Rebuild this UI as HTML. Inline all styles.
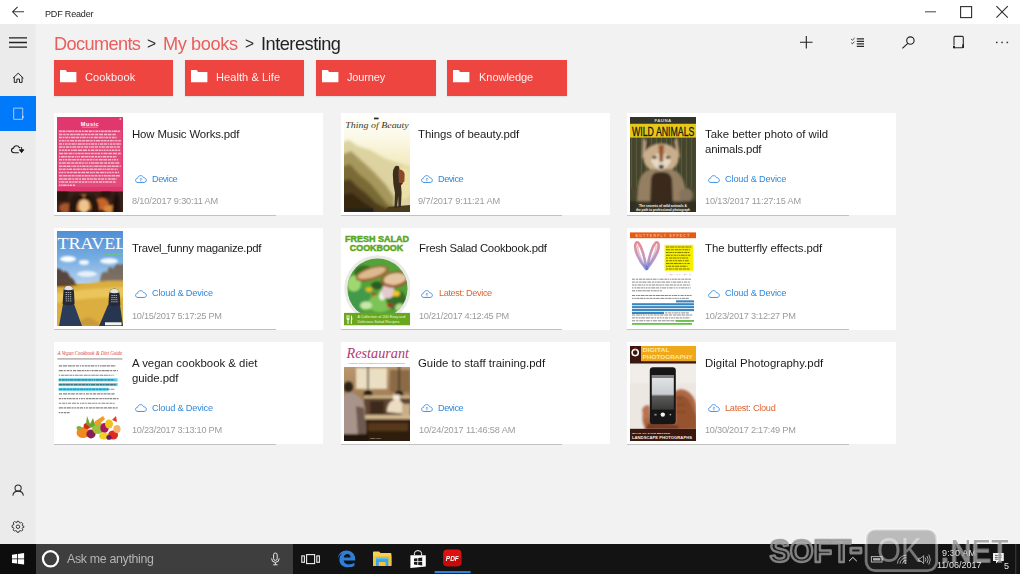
<!DOCTYPE html>
<html><head><meta charset="utf-8"><title>PDF Reader</title>
<style>
*{box-sizing:border-box;margin:0;padding:0}
html,body{width:1020px;height:574px;overflow:hidden;background:#f2f2f2;font-family:"Liberation Sans",sans-serif;}
#app{position:relative;width:1020px;height:574px;overflow:hidden;background:#f2f2f2}
.abs{position:absolute}
#titlebar{left:0;top:0;width:1020px;height:24px;background:#fff}
#sidebar{left:0;top:24px;width:37px;height:520px;background:linear-gradient(90deg,#ebebeb 0,#ebebeb 34.5px,#f2f2f2 36.5px)}
#sel{left:0;top:96px;width:36px;height:35px;background:#0079fb}
#taskbar{left:0;top:544px;width:1020px;height:30px;background:#131313}
#startbtn{left:0;top:544px;width:36px;height:30px;background:#0d0d0d}
#search{left:36px;top:544px;width:257px;height:30px;background:#3e3e3e}
span.f{position:absolute;white-space:nowrap;line-height:1;display:block;will-change:transform}
.bc{top:34.5px;font-size:18.2px}
.bc.red{color:#ea5e5b}
.bc.sep{color:#2c2c2c;font-size:15.6px;top:36.4px}
.bc.blk{color:#222}
.apptitle{top:9.5px;font-size:9px;color:#1e1e1e}
.folder{position:absolute;top:60.3px;width:119.6px;height:35.6px;background:#ef4541;box-shadow:0 1px 1.5px rgba(0,0,0,.10)}
.folder svg{position:absolute;left:6px;top:9.8px}
.fol{top:71.7px;font-size:11px;color:#fdf3f2}
.card{position:absolute;width:269px;height:102px;background:#fff}
.card .ul{position:absolute;left:0;bottom:-.5px;width:221.5px;height:1px;background:#c2c2c2}
.card .th{position:absolute;left:3px;top:3.5px;width:66px;height:95px;overflow:hidden}
.card .th svg{display:block}
.ti{font-size:11.4px;color:#1c1c1c}
.lo{font-size:9.2px;color:#3088da}
.lo.or{color:#dc642f}
.cl{position:absolute;width:12px;height:8.3px}
.cl svg{display:block}
.dt{font-size:9.2px;color:#9b9b9b}
.ask{top:552.6px;font-size:12.4px;color:#b4b4b4}
.clk{font-size:9px;color:#e4e4e4}
svg{overflow:visible}
</style></head><body>
<div id="app">
<div class="abs" id="titlebar"></div>
<div class="abs" id="sidebar"></div>
<div class="abs" id="sel"></div>
<!-- chrome icons -->
<svg class="abs" style="left:0;top:0" width="1020" height="160" viewBox="0 0 1020 160" fill="none" stroke="#333" stroke-width="1.1" stroke-linecap="butt">
  <!-- back arrow -->
  <path d="M12.6 11.8H24M17.6 6.8L12.6 11.8L17.6 16.8" stroke="#3a3a3a" stroke-width="1.1"/>
  <!-- window controls -->
  <path d="M925 11.8H936" stroke="#555"/>
  <rect x="960.6" y="6.6" width="11" height="11" stroke="#2e2e2e"/>
  <path d="M996.4 6.2L1007.8 17.6M1007.8 6.2L996.4 17.6" stroke="#2e2e2e"/>
  <!-- hamburger -->
  <path d="M9 37.8H27M9 42.5H27M9 47.2H27" stroke="#222" stroke-width="1.3"/>
  <!-- home -->
  <path d="M13 78.2L18.2 73.2L23.4 78.2M14.3 77.2V82.4H16.9V79.1H19.5V82.4H22.1V77.2" stroke="#222" stroke-width="1"/>
  <!-- device (selected) -->
  <path d="M13.7 108.1H22.7V115.8M22.7 118V119.3H13.7V108.1" stroke="#a6cbfb" stroke-width="1"/>
  <rect x="22" y="115.8" width="1.6" height="2.2" fill="#c4dcfc" stroke="none"/>
  <!-- cloud download -->
  <path d="M18.8 152.7H14.3C12.6 152.7 11.5 151.7 11.5 150.3C11.5 149.1 12.4 148.2 13.6 148.1C13.9 146.7 15.1 145.8 16.5 145.8C17.7 145.8 18.7 146.4 19.2 147.4C19.6 147.4 20 147.5 20.3 147.7" stroke="#1a1a1a" stroke-width="1.1"/>
  <path d="M21.6 147V150M19.4 149.7H23.8L21.6 152.7Z" fill="#1a1a1a" stroke="#1a1a1a" stroke-width=".9"/>
  <!-- toolbar: plus -->
  <path d="M800 42.3H812.6M806.3 36V48.6" stroke="#222" stroke-width="1.1"/>
  <!-- list -->
  <path d="M856.8 38.9H864M856.8 41.4H864M856.8 43.9H864M856.8 46.4H864" stroke="#2a2a2a" stroke-width="1.1"/>
  <path d="M851.2 39.2L852.4 40.2L854.6 38M851.2 42.8L852.4 43.8L854.6 41.6" stroke="#2a2a2a" stroke-width=".9"/>
  <!-- search -->
  <circle cx="910.4" cy="40.6" r="3.7" stroke="#222" stroke-width="1.1"/>
  <path d="M907.8 43.4L902.4 48.4" stroke="#222" stroke-width="1.2"/>
  <!-- device icon -->
  <path d="M955 36.4H962.3Q963.3 36.4 963.3 37.4V46.8Q963.3 47.8 962.3 47.8H953.8M954 45.6V37.4Q954 36.4 955 36.4" stroke="#2a2a2a" stroke-width="1.1"/>
  <rect x="962.2" y="44.4" width="1.8" height="3.6" fill="#222" stroke="none"/>
  <rect x="953" y="46" width="2" height="2.2" fill="#222" stroke="none"/>
  <!-- dots -->
  <g fill="#333" stroke="none"><rect x="996" y="41.7" width="1.5" height="1.5"/><rect x="1001.3" y="41.7" width="1.5" height="1.5"/><rect x="1006.6" y="41.7" width="1.5" height="1.5"/></g>
</svg>
<!-- person + gear -->
<svg class="abs" style="left:0;top:480px" width="36" height="60" viewBox="0 480 36 60" fill="none" stroke="#2a2a2a" stroke-width="1.05">
  <circle cx="18.1" cy="488" r="3.1"/>
  <path d="M12.8 495.6C13.2 492.6 15.4 491.1 18.1 491.1C20.8 491.1 23 492.6 23.4 495.6"/>
  <g transform="translate(18 526.7) scale(.88) translate(-18 -526.7)"><circle cx="18" cy="526.7" r="2"/>
  <path d="M16.9 520.6H19.1L19.5 522.1L20.6 522.6L22 521.8L23.5 523.3L22.7 524.7L23.2 525.8L24.7 526.2V527.4L23.2 527.8L22.7 528.9L23.5 530.3L22 531.8L20.6 531L19.5 531.5L19.1 533H16.9L16.5 531.5L15.4 531L14 531.8L12.5 530.3L13.3 528.9L12.8 527.8L11.3 527.4V525.2L12.8 524.8L13.3 523.7L12.5 522.3L14 520.8L15.4 521.6L16.5 522.1Z" stroke-width="1.05"/></g>
</svg>
<div class="abs" id="taskbar"></div>
<div class="abs" id="startbtn"></div>
<div class="abs" id="search"></div>

<div id="bc">
<span id="bc1" class="f bc red" style="left:54.10px;letter-spacing:-0.637px;">Documents</span>
<span id="bc2" class="f bc sep" style="left:147.30px;letter-spacing:0.000px;">&gt;</span>
<span id="bc3" class="f bc red" style="left:163.30px;letter-spacing:-0.406px;">My books</span>
<span id="bc4" class="f bc sep" style="left:244.50px;letter-spacing:0.000px;">&gt;</span>
<span id="bc5" class="f bc blk" style="left:260.50px;letter-spacing:-0.494px;">Interesting</span>
</div>
<span id="apptitle" class="f apptitle" style="left:45.30px;letter-spacing:-0.170px;">PDF Reader</span>
<div class="folder" style="left:53.5px"><svg width="17" height="13" viewBox="0 0 17 13"><path d="M0 .4Q0 0 .4 0H5.4Q5.9 0 6.2.5L6.9 1.9H15.9Q16.4 1.9 16.4 2.4V11.8Q16.4 12.3 15.9 12.3H.5Q0 12.3 0 11.8Z" fill="#fff"/></svg>
</div>
<span id="fo0" class="f fol" style="left:84.50px;letter-spacing:0.093px;">Cookbook</span>
<div class="folder" style="left:184.75px"><svg width="17" height="13" viewBox="0 0 17 13"><path d="M0 .4Q0 0 .4 0H5.4Q5.9 0 6.2.5L6.9 1.9H15.9Q16.4 1.9 16.4 2.4V11.8Q16.4 12.3 15.9 12.3H.5Q0 12.3 0 11.8Z" fill="#fff"/></svg>
</div>
<span id="fo1" class="f fol" style="left:216.00px;letter-spacing:0.085px;">Health &amp; Life</span>
<div class="folder" style="left:316.0px"><svg width="17" height="13" viewBox="0 0 17 13"><path d="M0 .4Q0 0 .4 0H5.4Q5.9 0 6.2.5L6.9 1.9H15.9Q16.4 1.9 16.4 2.4V11.8Q16.4 12.3 15.9 12.3H.5Q0 12.3 0 11.8Z" fill="#fff"/></svg>
</div>
<span id="fo2" class="f fol" style="left:346.70px;letter-spacing:-0.140px;">Journey</span>
<div class="folder" style="left:447.25px"><svg width="17" height="13" viewBox="0 0 17 13"><path d="M0 .4Q0 0 .4 0H5.4Q5.9 0 6.2.5L6.9 1.9H15.9Q16.4 1.9 16.4 2.4V11.8Q16.4 12.3 15.9 12.3H.5Q0 12.3 0 11.8Z" fill="#fff"/></svg>
</div>
<span id="fo3" class="f fol" style="left:478.80px;letter-spacing:-0.030px;">Knowledge</span>
<div class="card" style="left:54px;top:113px"><div class="th"><svg width="66" height="95" viewBox="0 0 66 95"><defs><filter id="b1" x="-20%" y="-20%" width="140%" height="140%"><feGaussianBlur stdDeviation="1.3"/></filter><clipPath id="c1"><rect x="0" y="74.5" width="66" height="20.5"/></clipPath></defs>
<rect width="66" height="95" fill="#e0376f"/>
<rect x="1" y="13" width="64" height="57" fill="#fff" opacity=".10"/>
<path d="M2 14.20H62.8" stroke="#fff" stroke-width="1.5" stroke-dasharray="2.8 0.6 3.0 0.8 1.4 0.5 3.7 0.6 1.9 0.9 2.6 0.8 2.6 0.8 1.7 0.8 3.8 0.7 3.4 0.8 1.4 0.8 3.0 0.6 1.3 0.8 2.6 0.8" opacity="0.62" fill="none"/>
<path d="M2 17.38H59.6" stroke="#fff" stroke-width="1.5" stroke-dasharray="3.3 0.9 2.4 0.8 2.5 0.9 3.8 0.5 1.6 0.6 4.1 0.7 3.1 0.6 2.7 0.7 2.3 0.7 3.0 0.9 3.2 0.9 3.8 0.9 3.2 0.6 3.8 0.9" opacity="0.62" fill="none"/>
<path d="M2 20.56H59.5" stroke="#fff" stroke-width="1.5" stroke-dasharray="2.9 0.8 1.8 0.8 2.9 0.6 1.4 0.8 4.2 0.5 3.6 0.7 1.7 0.6 3.5 0.8 1.3 0.7 1.3 0.8 2.2 0.9 4.1 0.7 4.2 0.6 1.4 0.7" opacity="0.62" fill="none"/>
<path d="M2 23.74H63.8" stroke="#fff" stroke-width="1.5" stroke-dasharray="1.8 0.7 3.0 0.6 1.3 0.8 2.1 0.9 3.9 0.7 2.6 0.7 3.1 0.7 2.9 0.7 4.0 0.7 2.5 0.8 1.9 0.6 4.1 0.7 2.8 0.5 2.4 0.7" opacity="0.62" fill="none"/>
<path d="M2 26.92H63.9" stroke="#fff" stroke-width="1.5" stroke-dasharray="3.0 0.8 1.4 0.8 2.6 0.8 2.3 0.8 3.4 0.5 1.4 0.8 4.1 0.6 2.6 0.7 2.2 0.6 2.1 0.6 3.0 0.6 2.3 0.8 1.3 0.7 3.4 0.6" opacity="0.62" fill="none"/>
<path d="M2 30.10H62.9" stroke="#fff" stroke-width="1.5" stroke-dasharray="3.6 0.6 1.8 0.7 3.3 0.5 2.2 0.6 3.7 0.7 3.8 0.6 2.2 0.8 3.9 0.7 1.9 0.5 2.8 0.6 3.6 0.8 1.8 0.6 3.6 0.8 3.6 0.6" opacity="0.62" fill="none"/>
<path d="M2 33.28H63.4" stroke="#fff" stroke-width="1.5" stroke-dasharray="2.1 0.8 2.0 0.6 2.5 0.7 2.4 0.9 1.7 0.5 4.0 0.9 4.2 0.7 4.1 0.9 1.9 0.8 3.7 0.8 2.8 0.6 2.2 0.6 1.4 0.7 2.1 0.8" opacity="0.62" fill="none"/>
<path d="M2 36.46H63.8" stroke="#fff" stroke-width="1.5" stroke-dasharray="3.9 0.8 4.0 0.9 3.9 0.7 1.2 0.8 1.7 0.6 3.2 0.7 2.4 0.9 3.0 0.6 2.0 0.8 2.6 0.8 2.3 0.6 2.8 0.8 1.7 0.8 4.0 0.8" opacity="0.62" fill="none"/>
<path d="M2 39.64H59.9" stroke="#fff" stroke-width="1.5" stroke-dasharray="1.2 0.8 3.8 0.5 2.0 0.6 2.8 0.7 2.6 0.8 1.2 0.5 1.6 0.5 1.4 0.9 3.8 0.5 2.7 0.6 2.1 0.6 3.1 0.7 2.3 0.6 2.2 0.5" opacity="0.62" fill="none"/>
<path d="M2 42.82H61.2" stroke="#fff" stroke-width="1.5" stroke-dasharray="3.3 0.7 1.4 0.6 2.3 0.7 3.5 0.7 3.6 0.7 2.5 0.6 2.7 0.8 2.5 0.8 2.6 0.6 2.8 0.8 1.4 0.7 2.5 0.9 4.0 0.6 3.9 0.8" opacity="0.62" fill="none"/>
<path d="M2 46.00H62.7" stroke="#fff" stroke-width="1.5" stroke-dasharray="2.6 0.5 3.6 0.8 3.9 0.8 3.2 0.8 2.9 0.5 3.0 0.5 1.6 0.8 1.3 0.5 1.5 0.9 1.7 0.5 3.7 0.5 3.7 0.8 3.7 0.9 2.9 0.8" opacity="0.62" fill="none"/>
<path d="M2 49.18H63.8" stroke="#fff" stroke-width="1.5" stroke-dasharray="3.5 0.7 3.3 0.5 3.4 0.9 1.4 0.6 2.9 0.8 1.9 0.6 1.9 0.7 3.5 0.7 2.3 0.7 2.3 0.7 1.4 0.7 4.1 0.7 3.4 0.6 3.3 0.8" opacity="0.62" fill="none"/>
<path d="M2 52.36H60.6" stroke="#fff" stroke-width="1.5" stroke-dasharray="2.8 0.7 3.1 0.9 1.6 0.5 3.4 0.9 2.8 0.7 3.4 0.6 2.0 0.6 3.0 0.6 1.9 0.8 4.1 0.6 3.3 0.7 3.8 0.7 2.0 0.6 1.3 0.7" opacity="0.62" fill="none"/>
<path d="M2 55.54H62.1" stroke="#fff" stroke-width="1.5" stroke-dasharray="1.7 0.6 2.2 0.8 1.6 0.9 2.6 0.7 2.6 0.8 3.7 0.7 2.6 0.8 3.8 0.7 3.4 0.9 2.6 0.6 1.9 0.8 3.2 0.9 3.8 0.6 1.8 0.6" opacity="0.62" fill="none"/>
<path d="M2 58.72H63.1" stroke="#fff" stroke-width="1.5" stroke-dasharray="3.3 0.8 3.9 0.6 3.8 0.6 2.5 0.8 1.5 0.5 3.7 0.6 2.3 0.7 3.2 0.5 2.2 0.7 2.7 0.6 3.0 0.9 2.4 0.7 1.6 0.6 3.2 0.5" opacity="0.62" fill="none"/>
<path d="M2 61.90H59.6" stroke="#fff" stroke-width="1.5" stroke-dasharray="3.9 0.5 4.0 0.6 3.5 0.8 2.1 0.8 3.2 0.8 2.0 0.8 4.1 0.8 2.8 0.5 2.7 0.6 3.4 0.8 2.9 0.6 3.1 0.8 1.7 0.9 3.2 0.5" opacity="0.62" fill="none"/>
<path d="M2 65.08H59.3" stroke="#fff" stroke-width="1.5" stroke-dasharray="1.6 0.6 3.4 0.7 2.9 0.8 2.6 0.6 1.7 0.5 3.3 0.8 2.8 0.8 2.3 0.6 2.4 0.8 1.3 0.7 1.9 0.8 2.3 0.6 2.4 0.7 3.5 0.6" opacity="0.62" fill="none"/>
<path d="M2 68.26H18.0" stroke="#fff" stroke-width="1.5" stroke-dasharray="1.5 0.6 1.5 0.5 3.5 0.8 1.8 0.6 2.4 0.8 3.6 0.8 3.0 0.6 2.4 0.6 2.8 0.7 1.8 0.6 3.5 0.5 3.6 0.9 4.0 0.7 2.9 0.7" opacity="0.62" fill="none"/>
<text x="33" y="8.6" font-family="Liberation Sans,sans-serif" font-weight="700" font-size="5.6" letter-spacing=".5" fill="#fff" text-anchor="middle">Music</text>
<rect x="25" y="9.8" width="16" height=".6" fill="#f6b6cc"/><rect x="62.6" y="1.2" width="1.6" height="1.6" fill="#f3c3d4"/>
<rect y="74.5" width="66" height="20.5" fill="#3a2118"/>
<g clip-path="url(#c1)"><g filter="url(#b1)">
<ellipse cx="26" cy="86" rx="11" ry="9" fill="#c9783a"/>
<ellipse cx="27" cy="89" rx="5" ry="7" fill="#ecc68c"/>
<ellipse cx="44" cy="87" rx="8" ry="6" fill="#c8642a"/>
<ellipse cx="9" cy="91" rx="7" ry="5" fill="#a9542a"/>
<ellipse cx="53" cy="92" rx="7" ry="4" fill="#d98a3c"/>
<path d="M12 96C11 84 16 76.5 24 77.5C27 78 27 81 26 83C22 82 19 86 20 96ZM42 96C43 84 38 76.5 30 77.5C27 78 27 81 28 83C32 82 35 86 34 96Z" fill="#23120c"/>
<path d="M55 96L56.5 81L59.5 75L62 81L62.5 96Z" fill="#1c0e0a"/>
<rect x="-2" y="73" width="13" height="11" fill="#2a1711"/><rect x="44" y="73" width="10" height="8" fill="#2a1711"/>
</g></g>
</svg></div><div class="ul"></div></div>
<span id="ti0_0" class="f ti" style="left:131.90px;letter-spacing:-0.141px;top:128.8px;">How Music Works.pdf</span>
<div class="cl" style="left:134.9px;top:175.4px"><svg width="12" height="8.3" viewBox="0 0 13 9"><path d="M3.2 8.1C1.7 8.1.6 7.1.6 5.8C.6 4.6 1.5 3.7 2.7 3.6C3 1.9 4.4.7 6.1.7C7.6.7 8.8 1.6 9.3 2.9C10.9 3 12.3 4.2 12.3 5.7C12.3 7.1 11.2 8.1 9.8 8.1Z" fill="none" stroke="#3f90e0" stroke-width="1.05"/><path d="M6.4 7V3.6M5.2 4.7L6.4 3.5L7.6 4.7" fill="none" stroke="#5a8fd0" stroke-width=".8"/></svg>
</div>
<span id="lo0" class="f lo" style="left:151.90px;letter-spacing:-0.499px;top:174.8px;">Device</span>
<span id="dt0" class="f dt" style="left:131.90px;letter-spacing:-0.160px;top:197.0px;">8/10/2017 9:30:11 AM</span>
<div class="card" style="left:340.5px;top:113px"><div class="th"><svg width="66" height="95" viewBox="0 0 66 95"><defs><filter id="b2" x="-20%" y="-20%" width="140%" height="140%"><feGaussianBlur stdDeviation="1.8"/></filter><filter id="bh2" x="-20%" y="-20%" width="140%" height="140%"><feGaussianBlur stdDeviation=".45"/></filter><linearGradient id="g2" x1="0" y1="0" x2="0" y2="1"><stop offset="0" stop-color="#fffefa"/><stop offset=".22" stop-color="#fbf8e6"/><stop offset=".55" stop-color="#f1e8b8"/><stop offset="1" stop-color="#d4c684"/></linearGradient><clipPath id="c2"><rect width="66" height="95"/></clipPath></defs>
<rect width="66" height="95" fill="url(#g2)"/>
<g clip-path="url(#c2)"><g filter="url(#b2)">
<path d="M-3 26L5 23L13 29L26 33L42 42L66 50V95H-3Z" fill="#ddd3a0"/>
<path d="M-3 38L7 34L18 44L30 55L42 68L50 80V95H-3Z" fill="#a6985c"/>
<path d="M-3 50L6 47L15 57L26 66L36 78L44 88L66 92V97H-3Z" fill="#7a6a36"/>
<path d="M-3 64L6 62L14 70L22 76L32 86L44 92L66 94V98H-3Z" fill="#4e3e1c"/>
<path d="M-3 78L8 76L18 84L30 92V98H-3Z" fill="#35280f"/>
<ellipse cx="60" cy="66" rx="9" ry="16" fill="#ece2a8"/>
</g>
<g filter="url(#bh2)">
<path d="M40 95L44 90L66 88V95Z" fill="#4a3a1e"/>
<path d="M50.8 49.8Q53 47.6 55 49.6L55.6 53L58.5 54.5Q60.5 56 60 62L58.5 67L57 68L57.6 76L56.8 90.5H54.4L54.2 79L53 91H50.4L51 76L49.4 67L48.8 57Q49 52 50.8 49.8Z" fill="#3b2e1c"/>
<path d="M54.5 52.5Q59.4 52 60.6 57L60.4 64.5Q57.5 67.4 54.8 65.5Z" fill="#8c4a2c"/>
</g>
<rect x="1" y="91.4" width="28" height="3" fill="#26241a"/>
</g>
<rect x="30" y=".6" width="4.6" height="1.7" fill="#2a2a1c"/>
<text x="1.2" y="11.4" font-family="Liberation Serif,serif" font-style="italic" font-size="8.4" fill="#3a3a22" textLength="63.6" lengthAdjust="spacingAndGlyphs">Thing of Beauty</text>
</svg>
</div><div class="ul"></div></div>
<span id="ti1_0" class="f ti" style="left:418.20px;letter-spacing:-0.057px;top:128.8px;">Things of beauty.pdf</span>
<div class="cl" style="left:421.4px;top:175.4px"><svg width="12" height="8.3" viewBox="0 0 13 9"><path d="M3.2 8.1C1.7 8.1.6 7.1.6 5.8C.6 4.6 1.5 3.7 2.7 3.6C3 1.9 4.4.7 6.1.7C7.6.7 8.8 1.6 9.3 2.9C10.9 3 12.3 4.2 12.3 5.7C12.3 7.1 11.2 8.1 9.8 8.1Z" fill="none" stroke="#3f90e0" stroke-width="1.05"/><path d="M6.4 7V3.6M5.2 4.7L6.4 3.5L7.6 4.7" fill="none" stroke="#5a8fd0" stroke-width=".8"/></svg>
</div>
<span id="lo1" class="f lo" style="left:438.40px;letter-spacing:-0.499px;top:174.8px;">Device</span>
<span id="dt1" class="f dt" style="left:418.40px;letter-spacing:-0.112px;top:197.0px;">9/7/2017 9:11:21 AM</span>
<div class="card" style="left:627px;top:113px"><div class="th"><svg width="66" height="95" viewBox="0 0 66 95"><defs><filter id="b3" x="-20%" y="-20%" width="140%" height="140%"><feGaussianBlur stdDeviation="1.3"/></filter><clipPath id="c3"><rect y="20.6" width="66" height="74.4"/></clipPath><pattern id="gr3" width="5" height="40" patternUnits="userSpaceOnUse"><rect x="1" width="1" height="40" fill="#6b6d45" opacity=".45"/><rect x="3.4" width=".7" height="40" fill="#2e3020" opacity=".45"/></pattern></defs>
<rect width="66" height="95" fill="#47472f"/>
<rect width="66" height="6.8" fill="#34342a"/>
<text x="33" y="5.2" font-family="Liberation Sans,sans-serif" font-weight="700" font-size="4.4" fill="#d8d8cc" text-anchor="middle" letter-spacing=".4">FAUNA</text>
<g clip-path="url(#c3)">
<rect y="20.6" width="66" height="50" fill="url(#gr3)"/>
<g filter="url(#b3)">
<path d="M13 20L21 32L12 42ZM47 20L40 32L50 41Z" fill="#c4a684"/>
<path d="M16 24L20.5 31L15.5 35ZM45 24L41 31L46 35Z" fill="#3a2e22"/>
<ellipse cx="31" cy="41" rx="17.5" ry="14.5" fill="#c9ae8c"/>
<path d="M8 70Q10 54 22 52H40Q52 54 55 70L58 97H6Z" fill="#957f62"/>
<path d="M21 44Q31 62 41 44Q39 37 31 36Q23 37 21 44Z" fill="#e6dac6"/>
<path d="M28.5 28H34L33 45H29.5Z" fill="#99542c"/>
<path d="M21 62Q22 54 31 55Q40 54 42 62L43 88H20Z" fill="#3a2a1e"/>
<ellipse cx="24.5" cy="40.3" rx="2.5" ry="1.5" fill="#4a2a18"/><ellipse cx="38" cy="40.3" rx="2.5" ry="1.5" fill="#4a2a18"/>
<ellipse cx="31.3" cy="49.8" rx="2.6" ry="2.1" fill="#120e0b"/>
<ellipse cx="56" cy="78" rx="7" ry="7" fill="#85735a"/>
<rect x="-2" y="84" width="70" height="14" fill="#2e2a1e" opacity=".85"/>
</g></g>
<rect y="6.8" width="66" height="13.8" fill="#e6c71c"/>
<text x="2" y="18.6" font-family="Liberation Sans,sans-serif" font-weight="400" font-size="12" fill="#1c1a0c" stroke="#1c1a0c" stroke-width=".3" textLength="62.4" lengthAdjust="spacingAndGlyphs">WILD ANIMALS</text>
<text x="33" y="90" font-family="Liberation Sans,sans-serif" font-weight="700" font-size="3" fill="#f2f2ea" text-anchor="middle" textLength="48" lengthAdjust="spacingAndGlyphs">The secrets of wild animals &amp;</text>
<text x="33" y="93.6" font-family="Liberation Sans,sans-serif" font-weight="700" font-size="3" fill="#f2f2ea" text-anchor="middle" textLength="54" lengthAdjust="spacingAndGlyphs">the path to professional photograph</text>
</svg>
</div><div class="ul"></div></div>
<span id="ti2_0" class="f ti" style="left:705.20px;letter-spacing:-0.016px;top:128.8px;">Take better photo of wild</span>
<span id="ti2_1" class="f ti" style="left:705.20px;letter-spacing:-0.175px;top:143.8px;">animals.pdf</span>
<div class="cl" style="left:707.9px;top:175.4px"><svg width="12" height="8.3" viewBox="0 0 13 9"><path d="M3.2 8.1C1.7 8.1.6 7.1.6 5.8C.6 4.6 1.5 3.7 2.7 3.6C3 1.9 4.4.7 6.1.7C7.6.7 8.8 1.6 9.3 2.9C10.9 3 12.3 4.2 12.3 5.7C12.3 7.1 11.2 8.1 9.8 8.1Z" fill="none" stroke="#3f90e0" stroke-width="1.05"/></svg>
</div>
<span id="lo2" class="f lo" style="left:725.00px;letter-spacing:-0.148px;top:174.8px;">Cloud &amp; Device</span>
<span id="dt2" class="f dt" style="left:705.20px;letter-spacing:-0.160px;top:197.0px;">10/13/2017 11:27:15 AM</span>
<div class="card" style="left:54px;top:227.5px"><div class="th"><svg width="66" height="95" viewBox="0 0 66 95"><defs><filter id="b4" x="-20%" y="-20%" width="140%" height="140%"><feGaussianBlur stdDeviation="1.1"/></filter><linearGradient id="s4" x1="0" y1="0" x2="0" y2="1"><stop offset="0" stop-color="#4f8fd6"/><stop offset=".3" stop-color="#78aee2"/><stop offset=".55" stop-color="#b4d0ec"/><stop offset=".56" stop-color="#d9aa3c"/><stop offset="1" stop-color="#e0b548"/></linearGradient><clipPath id="c4"><rect width="66" height="95"/></clipPath></defs>
<rect width="66" height="95" fill="url(#s4)"/>
<g clip-path="url(#c4)"><g filter="url(#b4)">
<ellipse cx="11" cy="28" rx="8" ry="3" fill="#fff"/><ellipse cx="27" cy="31.5" rx="5" ry="2.4" fill="#f4f8fd"/><ellipse cx="52" cy="30" rx="9" ry="3" fill="#f4f8fd"/><ellipse cx="30" cy="43" rx="10" ry="3" fill="#e8f0fa"/>
<path d="M-2 56L-2 38Q3 36 6 41Q10 38 13 46Q17 47 19 54L30 56Z" fill="#4b301f" opacity=".85"/>
<path d="M42 54L44 44Q47 38 50 42Q52 32 56 38Q60 30 63 34L68 32V54Z" fill="#6b4a2a" opacity=".7"/>
<path d="M-2 56Q20 56 40 51Q55 49 68 50V97H-2Z" fill="#dcae40"/>
<path d="M-2 62Q25 58 68 56V66Q30 66 -2 72Z" fill="#e9c55c"/>
<path d="M20 95Q30 78 44 95Z" fill="#c79a3a"/>
</g>
<path d="M2 95L6 73L17 73L25 95Z" fill="#2b3b5a"/><path d="M42 95L51 74L63 74L66 95Z" fill="#27364f"/>
<path d="M6.4 61Q6.2 54.6 11.2 54.4Q16.6 54.4 17 61L17.6 73Q12 75.6 5.6 73Z" fill="#262a36"/>
<path d="M52 64Q52.4 57.6 57.4 57.4Q62.4 57.4 62.8 64L63.4 74Q57 76.6 51.4 74Z" fill="#262a36"/>
<path d="M7 58.4Q7.6 54.8 11.2 54.8Q15.4 54.8 16.2 58.4Q11.6 60 7 58.4Z" fill="#e4e4de"/>
<path d="M52.8 61.4Q53.4 57.8 57.4 57.8Q61.4 57.8 62 61.4Q57.4 63 52.8 61.4Z" fill="#e4e4de"/>
<path d="M8.6 61.5H14.6M8.6 63.6H14.8M8.6 65.7H15M8.6 67.8H15.2M8.8 69.9H15.2" stroke="#d4d6da" stroke-width=".9" stroke-dasharray="1.4 .7" opacity=".85"/>
<path d="M54.4 64.5H60.6M54.4 66.6H60.8M54.2 68.7H61M54.2 70.8H61.2" stroke="#d4d6da" stroke-width=".9" stroke-dasharray="1.4 .7" opacity=".85"/>
<rect x="48" y="91.3" width="16.5" height="3" fill="#f4f4f0"/>
</g>
<text x=".4" y="18.4" font-family="Liberation Serif,serif" font-size="15.8" fill="#fff" textLength="69" lengthAdjust="spacingAndGlyphs">TRAVEL</text>
<text x="48" y="24.4" font-family="Liberation Sans,sans-serif" font-size="2.6" font-weight="700" fill="#5fd23c" textLength="17.5" lengthAdjust="spacingAndGlyphs">funny magazine</text>
</svg>
</div><div class="ul"></div></div>
<span id="ti3_0" class="f ti" style="left:132.30px;letter-spacing:-0.316px;top:243.3px;">Travel_funny maganize.pdf</span>
<div class="cl" style="left:134.9px;top:289.9px"><svg width="12" height="8.3" viewBox="0 0 13 9"><path d="M3.2 8.1C1.7 8.1.6 7.1.6 5.8C.6 4.6 1.5 3.7 2.7 3.6C3 1.9 4.4.7 6.1.7C7.6.7 8.8 1.6 9.3 2.9C10.9 3 12.3 4.2 12.3 5.7C12.3 7.1 11.2 8.1 9.8 8.1Z" fill="none" stroke="#3f90e0" stroke-width="1.05"/></svg>
</div>
<span id="lo3" class="f lo" style="left:151.90px;letter-spacing:-0.171px;top:289.3px;">Cloud &amp; Device</span>
<span id="dt3" class="f dt" style="left:132.00px;letter-spacing:-0.277px;top:311.5px;">10/15/2017 5:17:25 PM</span>
<div class="card" style="left:340.5px;top:227.5px"><div class="th"><svg width="66" height="95" viewBox="0 0 66 95"><defs><filter id="b5" x="-20%" y="-20%" width="140%" height="140%"><feGaussianBlur stdDeviation="1.2"/></filter><clipPath id="c5"><circle cx="33.5" cy="57.5" r="30"/></clipPath><clipPath id="k5"><rect width="66" height="95"/></clipPath></defs>
<rect width="66" height="95" fill="#fff"/>
<g clip-path="url(#k5)">
<circle cx="33.5" cy="57.5" r="33.2" fill="#e9e9e5"/>
<circle cx="33.5" cy="57.5" r="30" fill="#55a23a"/>
<g clip-path="url(#c5)"><g filter="url(#b5)" transform="translate(0 2.5)">
<ellipse cx="14" cy="66" rx="13" ry="12" fill="#3f9a4a"/>
<ellipse cx="20" cy="40" rx="10" ry="8" fill="#2f6f22"/>
<ellipse cx="36" cy="70" rx="12" ry="9" fill="#7cc455"/>
<ellipse cx="52" cy="66" rx="10" ry="10" fill="#356f28"/>
<ellipse cx="10" cy="50" rx="7" ry="8" fill="#9fd872"/><ellipse cx="22" cy="72" rx="6" ry="4" fill="#c9e8a8"/><ellipse cx="56" cy="74" rx="5" ry="4" fill="#b4dc8c"/><ellipse cx="38" cy="62" rx="3" ry="5" fill="#eef4e4"/>
<ellipse cx="33" cy="52" rx="6" ry="4" fill="#2b5c20"/>
<ellipse cx="44" cy="58" rx="6.5" ry="7" fill="#e6c9cf"/>
<ellipse cx="52" cy="60" rx="4" ry="3" fill="#f0c628"/>
<ellipse cx="25" cy="56" rx="3.4" ry="2.4" fill="#e9b926"/>
<ellipse cx="30" cy="61" rx="2.2" ry="1.6" fill="#d2302a"/>
<ellipse cx="46" cy="72" rx="3" ry="2" fill="#b02a2a"/>
<g transform="rotate(-17 28 40)"><ellipse cx="28" cy="40" rx="17" ry="6.4" fill="#a5642f"/><ellipse cx="28" cy="39.4" rx="14.6" ry="4.4" fill="#dcb98e"/></g>
<g transform="rotate(-8 51 46)"><ellipse cx="51" cy="46" rx="14" ry="8.2" fill="#9c5a2b"/><ellipse cx="51" cy="45.4" rx="11.4" ry="5.8" fill="#e3c6a0"/></g>
</g></g>
<rect y="81.9" width="66" height="12.6" fill="#69a81d"/>
<rect y="94.5" width="66" height=".5" fill="#fff"/>
<path d="M2.6 84V88Q2.6 89 3.5 89V93H4.5V89Q5.4 89 5.4 88V84H4.8V87.4H4.3V84H3.7V87.4H3.2V84ZM7 84Q8.4 85 8.4 88.4L7.8 89V93H6.8Z" fill="#fff"/>
</g>
<text x="1" y="10.8" font-family="Liberation Sans,sans-serif" font-weight="700" font-size="9.6" fill="#5aa61f" stroke="#5aa61f" stroke-width=".5" textLength="64" lengthAdjust="spacingAndGlyphs">FRESH SALAD</text>
<text x="5.8" y="19.6" font-family="Liberation Sans,sans-serif" font-weight="700" font-size="9.2" fill="#5aa61f" stroke="#5aa61f" stroke-width=".5" textLength="53.4" lengthAdjust="spacingAndGlyphs">COOKBOOK</text>
<text x="13.4" y="87.2" font-family="Liberation Sans,sans-serif" font-size="3.3" fill="#eef6e0" textLength="48" lengthAdjust="spacingAndGlyphs">A Collection of 200 Easy and</text>
<text x="13.4" y="91.6" font-family="Liberation Sans,sans-serif" font-size="3.3" fill="#eef6e0" textLength="42" lengthAdjust="spacingAndGlyphs">Delicious Salad Recipes</text>
</svg>
</div><div class="ul"></div></div>
<span id="ti4_0" class="f ti" style="left:418.80px;letter-spacing:-0.303px;top:243.3px;">Fresh Salad Cookbook.pdf</span>
<div class="cl" style="left:421.4px;top:289.9px"><svg width="12" height="8.3" viewBox="0 0 13 9"><path d="M3.2 8.1C1.7 8.1.6 7.1.6 5.8C.6 4.6 1.5 3.7 2.7 3.6C3 1.9 4.4.7 6.1.7C7.6.7 8.8 1.6 9.3 2.9C10.9 3 12.3 4.2 12.3 5.7C12.3 7.1 11.2 8.1 9.8 8.1Z" fill="none" stroke="#3f90e0" stroke-width="1.05"/><path d="M6.4 7V3.6M5.2 4.7L6.4 3.5L7.6 4.7" fill="none" stroke="#5a8fd0" stroke-width=".8"/></svg>
</div>
<span id="lo4" class="f lo or" style="left:438.80px;letter-spacing:-0.386px;top:289.3px;">Latest: Device</span>
<span id="dt4" class="f dt" style="left:418.80px;letter-spacing:-0.267px;top:311.5px;">10/21/2017 4:12:45 PM</span>
<div class="card" style="left:627px;top:227.5px"><div class="th"><svg width="66" height="95" viewBox="0 0 66 95"><defs><filter id="b6" x="-20%" y="-20%" width="140%" height="140%"><feGaussianBlur stdDeviation=".7"/></filter><linearGradient id="g6" x1="0" y1="0" x2="0" y2="1"><stop offset="0" stop-color="#d8404e"/><stop offset=".5" stop-color="#a05090"/><stop offset="1" stop-color="#4a62c8"/></linearGradient></defs>
<rect width="66" height="95" fill="#fff"/>
<rect y="1.4" width="66" height="5.8" fill="#e75a14"/>
<text x="33" y="6" font-family="Liberation Sans,sans-serif" font-size="3.6" font-weight="700" fill="#f6b48c" text-anchor="middle" letter-spacing="1.2">BUTTERFLY EFFECT</text>
<g filter="url(#b6)" fill="none" stroke="url(#g6)" stroke-linecap="round">
<path d="M16 38C9 30 3 17 6 12C9 8 14 22 16.5 38" stroke-width="2.6" opacity=".6"/>
<path d="M17 38C23 30 31 17 28 12C25 8 19.5 22 17 38" stroke-width="2.6" opacity=".6"/>
<path d="M16 37C11 28 7 19 8 15M17 37C22 28 27 19 26 15" stroke-width="1.6" opacity=".35"/>
</g>
<rect x="34.6" y="13.8" width="28.8" height="26" fill="#f6f000"/>
<path d="M36 16.00H61.5" stroke="#4a4600" stroke-width="1.0" stroke-dasharray="3.3 0.8 4.0 0.6 2.0 0.8 3.2 0.6 3.3 0.7 3.5 0.5 1.9 0.9 2.3 0.6 3.6 0.8 1.6 0.7 3.2 0.6 3.2 0.5 2.2 0.5 1.8 0.9" opacity="0.7" fill="none"/>
<path d="M36 18.75H60.0" stroke="#4a4600" stroke-width="1.0" stroke-dasharray="4.2 0.7 3.0 0.8 3.3 0.5 3.0 0.8 1.7 0.5 3.8 0.7 1.8 0.7 1.9 0.8 2.7 0.5 3.7 0.5 2.0 0.5 3.4 0.5 2.8 0.5 2.6 0.8" opacity="0.7" fill="none"/>
<path d="M36 21.50H59.3" stroke="#4a4600" stroke-width="1.0" stroke-dasharray="2.6 0.7 2.5 0.7 1.5 0.7 1.9 0.8 4.0 0.5 1.6 0.8 2.9 0.5 3.3 0.9 2.5 0.6 2.9 0.9 2.0 0.6 1.8 0.8 2.6 0.6 2.4 0.5" opacity="0.7" fill="none"/>
<path d="M36 24.25H60.4" stroke="#4a4600" stroke-width="1.0" stroke-dasharray="4.1 0.7 2.0 0.9 2.3 0.6 1.3 0.6 1.8 0.6 3.8 0.6 1.9 0.7 4.0 0.6 3.5 0.6 2.9 0.7 4.0 0.8 2.7 0.8 2.3 0.7 4.1 0.7" opacity="0.7" fill="none"/>
<path d="M36 27.00H58.1" stroke="#4a4600" stroke-width="1.0" stroke-dasharray="2.1 0.9 3.0 0.6 4.0 0.7 2.2 0.6 1.5 0.6 3.3 0.6 2.0 0.7 2.8 0.7 3.6 0.6 2.3 0.7 1.6 0.6 1.6 0.8 1.6 0.8 1.9 0.8" opacity="0.7" fill="none"/>
<path d="M36 29.75H58.7" stroke="#4a4600" stroke-width="1.0" stroke-dasharray="2.3 0.9 3.2 0.7 1.3 0.7 2.0 0.7 4.0 0.8 1.4 0.8 4.0 0.7 1.5 0.8 2.5 0.9 3.8 0.8 4.0 0.5 3.6 0.6 1.6 0.7 3.0 0.5" opacity="0.7" fill="none"/>
<path d="M36 32.50H59.8" stroke="#4a4600" stroke-width="1.0" stroke-dasharray="3.6 0.7 2.8 0.6 4.1 0.6 3.2 0.8 1.2 0.9 1.9 0.9 4.0 0.9 3.8 0.7 2.5 0.6 4.0 0.5 1.6 0.9 3.6 0.8 4.1 0.7 3.7 0.7" opacity="0.7" fill="none"/>
<path d="M36 35.25H57.5" stroke="#4a4600" stroke-width="1.0" stroke-dasharray="1.4 0.7 2.9 0.8 2.5 0.8 4.1 0.7 1.8 0.5 3.8 0.7 2.4 0.7 1.6 0.6 1.9 0.6 3.8 0.6 1.5 0.8 2.9 0.5 3.2 0.8 3.1 0.8" opacity="0.7" fill="none"/>
<path d="M36 38.00H59.9" stroke="#4a4600" stroke-width="1.0" stroke-dasharray="1.9 0.8 3.1 0.8 1.8 0.6 3.3 0.7 3.0 0.7 3.5 0.6 2.7 0.8 2.1 0.6 3.1 0.6 3.8 0.6 3.9 0.7 1.7 0.7 3.2 0.7 3.1 0.6" opacity="0.7" fill="none"/>
<text x="36" y="44" font-family="Liberation Serif,serif" font-style="italic" font-size="2.6" fill="#e04e84" textLength="25" lengthAdjust="spacingAndGlyphs">x = a(y − x), ẏ = x(b − z)</text>
<path d="M2 48.20H61.7" stroke="#3a3a3a" stroke-width="1.0" stroke-dasharray="2.9 0.9 2.6 0.7 3.0 0.6 2.7 0.8 3.6 0.5 2.1 0.5 3.6 0.8 1.3 0.9 4.1 0.8 3.0 0.6 1.2 0.7 1.4 0.6 1.9 0.5 2.6 0.7" opacity="0.6" fill="none"/>
<path d="M2 51.10H59.8" stroke="#3a3a3a" stroke-width="1.0" stroke-dasharray="2.8 0.8 2.7 0.8 2.6 0.6 4.2 0.9 3.7 0.8 2.1 0.6 2.1 0.5 3.5 0.7 3.7 0.7 4.1 0.8 1.2 0.6 3.9 0.7 4.1 0.7 1.4 0.8" opacity="0.6" fill="none"/>
<path d="M2 54.00H60.1" stroke="#3a3a3a" stroke-width="1.0" stroke-dasharray="2.0 0.5 2.2 0.9 3.5 0.5 1.9 0.5 1.4 0.8 1.7 0.7 2.5 0.6 3.4 0.6 3.1 0.5 2.5 0.6 2.0 0.9 3.6 0.6 3.9 0.6 2.4 0.8" opacity="0.6" fill="none"/>
<path d="M2 56.90H60.8" stroke="#3a3a3a" stroke-width="1.0" stroke-dasharray="1.5 0.9 1.8 0.6 3.5 0.6 2.1 0.5 1.5 0.7 1.9 0.7 2.3 0.7 4.1 0.7 2.9 0.8 1.7 0.6 3.9 0.8 1.9 0.6 3.4 0.9 1.8 0.9" opacity="0.6" fill="none"/>
<path d="M2 59.80H32.0" stroke="#3a3a3a" stroke-width="1.0" stroke-dasharray="3.0 0.7 1.5 0.5 4.1 0.6 3.3 0.6 3.7 0.7 2.1 0.6 3.4 0.5 1.9 0.7 3.8 0.7 2.0 0.9 1.8 0.5 2.0 0.7 1.4 0.6 2.3 0.7" opacity="0.6" fill="none"/>
<path d="M2 64.50H61.6" stroke="#3a3a3a" stroke-width="1.0" stroke-dasharray="3.2 0.8 1.6 0.5 2.3 0.6 3.6 0.8 3.0 0.7 3.2 0.6 2.5 0.6 3.9 0.5 3.7 0.5 3.3 0.6 2.4 0.8 1.3 0.5 3.9 0.7 1.5 0.9" opacity="0.6" fill="none"/>
<path d="M2 67.40H59.3" stroke="#3a3a3a" stroke-width="1.0" stroke-dasharray="1.5 0.7 1.6 0.6 3.1 0.6 3.3 0.5 1.7 0.8 2.4 0.7 3.0 0.7 2.4 0.5 3.4 0.9 4.1 0.8 2.3 0.6 3.3 0.8 1.5 0.6 2.3 0.7" opacity="0.6" fill="none"/>
<g fill="#3a86c0"><rect x="46" y="69.3" width="18" height="2.1"/><rect x="2" y="72.2" width="62" height="2.1"/><rect x="2" y="75.1" width="62" height="2.1"/><rect x="2" y="78" width="62" height="2.1"/><rect x="2" y="80.9" width="32" height="2.1"/></g>
<path d="M2 81.9H64" stroke="#3a3a3a" stroke-width="1" stroke-dasharray="0 33 2.5 .7 3 .6 1.8 .7 3.5 .6 2 .8 4 .6 3 20" opacity=".6"/>
<path d="M2 84.00H62.7" stroke="#3a3a3a" stroke-width="1.0" stroke-dasharray="3.3 0.8 3.7 0.6 1.9 0.6 1.9 0.8 1.6 0.7 1.8 0.6 2.5 0.8 3.0 0.5 2.0 0.6 3.8 0.8 3.6 0.8 3.4 0.9 3.6 0.6 3.7 0.7" opacity="0.6" fill="none"/>
<path d="M2 86.90H60.2" stroke="#3a3a3a" stroke-width="1.0" stroke-dasharray="2.9 0.7 2.3 0.7 2.1 0.5 3.7 0.8 4.2 0.8 2.9 0.8 1.6 0.8 2.5 0.6 1.8 0.7 2.0 0.7 3.0 0.7 1.6 0.7 1.9 0.6 1.8 0.6" opacity="0.6" fill="none"/>
<path d="M2 89.80H63.6" stroke="#3a3a3a" stroke-width="1.0" stroke-dasharray="3.2 0.9 2.4 0.8 4.0 0.5 1.6 0.8 3.7 0.8 1.7 0.7 3.8 0.9 3.6 0.6 3.8 0.6 3.3 0.6 4.1 0.7 3.4 0.6 3.1 0.7 3.0 0.6" opacity="0.6" fill="none"/>
<rect x="46" y="89.1" width="18" height="1.7" fill="#63c244"/><rect x="2" y="92" width="60" height="1.8" fill="#63c244"/>
</svg></div><div class="ul"></div></div>
<span id="ti5_0" class="f ti" style="left:705.20px;letter-spacing:-0.064px;top:243.3px;">The butterfly effects.pdf</span>
<div class="cl" style="left:707.9px;top:289.9px"><svg width="12" height="8.3" viewBox="0 0 13 9"><path d="M3.2 8.1C1.7 8.1.6 7.1.6 5.8C.6 4.6 1.5 3.7 2.7 3.6C3 1.9 4.4.7 6.1.7C7.6.7 8.8 1.6 9.3 2.9C10.9 3 12.3 4.2 12.3 5.7C12.3 7.1 11.2 8.1 9.8 8.1Z" fill="none" stroke="#3f90e0" stroke-width="1.05"/></svg>
</div>
<span id="lo5" class="f lo" style="left:725.00px;letter-spacing:-0.148px;top:289.3px;">Cloud &amp; Device</span>
<span id="dt5" class="f dt" style="left:705.20px;letter-spacing:-0.237px;top:311.5px;">10/23/2017 3:12:27 PM</span>
<div class="card" style="left:54px;top:342px"><div class="th"><svg width="66" height="95" viewBox="0 0 66 95"><defs><filter id="b7" x="-20%" y="-20%" width="140%" height="140%"><feGaussianBlur stdDeviation=".45"/></filter></defs>
<rect width="66" height="95" fill="#fff"/>
<text x=".6" y="9" font-family="Liberation Serif,serif" font-style="italic" font-size="6.2" fill="#d2423e" textLength="64.6" lengthAdjust="spacingAndGlyphs">A Vegan Cookbook &amp; Diet Guide</text>
<rect x=".4" y="12.6" width="65" height=".7" fill="#555"/>
<g fill="#4fd2ee"><rect x="1.6" y="32.4" width="59" height="3"/><rect x="1.6" y="37.1" width="59" height="3"/><rect x="1.6" y="41.8" width="50" height="3"/></g>
<path d="M1.8 19.90H58.9" stroke="#3c3c3c" stroke-width="1.15" stroke-dasharray="3.4 0.8 4.0 0.8 4.0 0.5 2.6 0.9 3.1 0.9 1.5 0.7 1.9 0.7 2.9 0.5 1.9 0.6 3.9 0.8 1.7 0.8 1.6 0.7 1.6 0.5 3.8 0.6" opacity="0.62" fill="none"/>
<path d="M1.8 24.57H60.9" stroke="#3c3c3c" stroke-width="1.15" stroke-dasharray="4.1 0.8 2.1 0.9 2.8 0.8 1.8 0.9 3.3 0.9 3.9 0.6 2.3 0.6 1.6 0.5 2.1 0.7 1.2 0.8 2.2 0.6 3.7 0.7 2.1 0.7 3.3 0.5" opacity="0.62" fill="none"/>
<path d="M1.8 29.24H57.1" stroke="#3c3c3c" stroke-width="1.15" stroke-dasharray="1.3 0.8 3.7 0.5 3.6 0.6 2.9 0.5 1.3 0.6 4.1 0.6 3.5 0.9 4.0 0.6 2.3 0.7 3.5 0.5 3.4 0.8 3.8 0.5 4.0 0.5 2.2 0.7" opacity="0.62" fill="none"/>
<path d="M1.8 33.91H57.4" stroke="#3c3c3c" stroke-width="1.15" stroke-dasharray="2.2 0.9 2.8 0.6 2.2 0.6 1.4 0.6 3.3 0.9 1.7 0.5 4.2 0.7 2.4 0.6 3.0 0.8 2.6 0.7 1.4 0.9 1.3 0.7 3.7 0.6 3.4 0.9" opacity="0.62" fill="none"/>
<path d="M1.8 38.58H58.8" stroke="#3c3c3c" stroke-width="1.15" stroke-dasharray="3.6 0.5 2.5 0.6 3.7 0.6 2.6 0.9 3.8 0.9 2.6 0.7 3.4 0.7 2.1 0.7 1.6 0.7 4.2 0.9 3.1 0.7 2.2 0.5 2.0 0.8 3.8 0.6" opacity="0.62" fill="none"/>
<path d="M1.8 43.25H58.1" stroke="#3c3c3c" stroke-width="1.15" stroke-dasharray="3.5 0.8 3.2 0.8 2.3 0.8 2.0 0.7 3.5 0.8 2.1 0.9 3.1 0.7 1.2 0.7 2.0 0.8 2.6 0.8 3.1 0.8 2.2 0.8 3.4 0.8 2.3 0.8" opacity="0.62" fill="none"/>
<path d="M1.8 47.92H57.7" stroke="#3c3c3c" stroke-width="1.15" stroke-dasharray="3.3 0.9 4.1 0.7 2.8 0.6 3.7 0.9 2.6 0.8 3.4 0.8 1.7 0.8 2.9 0.8 2.5 0.7 3.5 0.8 3.4 0.5 1.7 0.7 3.2 0.6 3.3 0.8" opacity="0.62" fill="none"/>
<path d="M1.8 52.59H61.8" stroke="#3c3c3c" stroke-width="1.15" stroke-dasharray="2.6 0.6 1.4 0.6 2.2 0.6 1.8 0.5 2.6 0.7 3.0 0.7 1.9 0.9 1.2 0.7 2.0 0.7 1.5 0.8 2.3 0.5 3.0 0.5 2.8 0.6 2.9 0.9" opacity="0.62" fill="none"/>
<path d="M1.8 57.26H57.9" stroke="#3c3c3c" stroke-width="1.15" stroke-dasharray="2.5 0.8 3.1 0.6 1.6 0.7 2.9 0.9 4.1 0.7 2.3 0.9 1.2 0.5 2.9 0.7 1.6 0.8 3.9 0.7 2.5 0.6 2.1 0.9 2.3 0.9 3.9 0.7" opacity="0.62" fill="none"/>
<path d="M1.8 61.93H60.7" stroke="#3c3c3c" stroke-width="1.15" stroke-dasharray="4.1 0.7 2.4 0.6 4.2 0.7 2.1 0.7 1.6 0.7 2.5 0.6 3.5 0.8 1.2 0.7 2.0 0.9 3.5 0.6 2.0 0.6 4.2 0.6 3.0 0.7 3.1 0.7" opacity="0.62" fill="none"/>
<path d="M1.8 66.60H12.8" stroke="#3c3c3c" stroke-width="1.15" stroke-dasharray="1.6 0.8 2.1 0.7 2.2 0.6 2.8 0.7 2.3 0.8 3.0 0.5 2.0 0.7 3.9 0.9 2.8 0.5 3.5 0.7 2.9 0.8 3.1 0.7 3.9 0.7 2.4 0.8" opacity="0.62" fill="none"/>
<g filter="url(#b7)">
<ellipse cx="26" cy="86.5" rx="6.4" ry="5.6" fill="#f08a1e"/>
<ellipse cx="34" cy="88" rx="4.6" ry="4.4" fill="#8a1f5a"/>
<ellipse cx="41" cy="82" rx="6" ry="6" fill="#9dc13e"/>
<ellipse cx="47.5" cy="82" rx="4.2" ry="5" fill="#a8195c"/>
<ellipse cx="52" cy="78" rx="4" ry="4.6" fill="#f2c21f"/>
<ellipse cx="56" cy="89" rx="5" ry="4.6" fill="#dd2a22"/>
<ellipse cx="47" cy="90" rx="5" ry="3.6" fill="#f0d024"/>
<ellipse cx="60" cy="83" rx="3.6" ry="4" fill="#f3b36a"/>
<ellipse cx="30" cy="80" rx="3.4" ry="3" fill="#d9261f"/>
<ellipse cx="52" cy="91.4" rx="2.6" ry="2.4" fill="#6a1e66"/>
<path d="M30 70L33 78L36 72L38 79L34 82L29 78Z" fill="#6aa32c"/>
<path d="M37 76L46 70L48 73L40 80Z" fill="#f29a2a"/>
<path d="M55 74L59 70L60 76Z" fill="#e23a20"/>
<ellipse cx="22" cy="82" rx="2.6" ry="2" fill="#7db23a"/>
</g>
</svg></div><div class="ul"></div></div>
<span id="ti6_0" class="f ti" style="left:131.90px;letter-spacing:0.005px;top:357.8px;">A vegan cookbook &amp; diet</span>
<span id="ti6_1" class="f ti" style="left:131.90px;letter-spacing:-0.059px;top:372.8px;">guide.pdf</span>
<div class="cl" style="left:134.9px;top:404.4px"><svg width="12" height="8.3" viewBox="0 0 13 9"><path d="M3.2 8.1C1.7 8.1.6 7.1.6 5.8C.6 4.6 1.5 3.7 2.7 3.6C3 1.9 4.4.7 6.1.7C7.6.7 8.8 1.6 9.3 2.9C10.9 3 12.3 4.2 12.3 5.7C12.3 7.1 11.2 8.1 9.8 8.1Z" fill="none" stroke="#3f90e0" stroke-width="1.05"/></svg>
</div>
<span id="lo6" class="f lo" style="left:151.90px;letter-spacing:-0.171px;top:403.8px;">Cloud &amp; Device</span>
<span id="dt6" class="f dt" style="left:131.90px;letter-spacing:-0.272px;top:426.0px;">10/23/2017 3:13:10 PM</span>
<div class="card" style="left:340.5px;top:342px"><div class="th"><svg width="66" height="95" viewBox="0 0 66 95"><defs><filter id="b8" x="-20%" y="-20%" width="140%" height="140%"><feGaussianBlur stdDeviation="1.1"/></filter><linearGradient id="g8" x1="0" y1="0" x2="0" y2="1"><stop offset="0" stop-color="#b89870"/><stop offset=".45" stop-color="#a07a52"/><stop offset=".7" stop-color="#6a4626"/><stop offset="1" stop-color="#2c1a0c"/></linearGradient><clipPath id="c8"><rect y="21" width="66" height="74"/></clipPath></defs>
<rect width="66" height="95" fill="#fff"/>
<rect y="21" width="66" height="74" fill="url(#g8)"/>
<g clip-path="url(#c8)"><g filter="url(#b8)">
<rect x="12" y="22" width="31" height="21" fill="#eadfc2"/>
<rect x="46" y="24" width="20" height="22" fill="#8a6a46"/>
<rect x="23.4" y="20" width="1.2" height="26" fill="#2a1c12"/><rect x="54.6" y="20" width="1.2" height="26" fill="#2a1c12"/>
<path d="M19 50L21 45H27L29 50Z" fill="#241710"/><path d="M50 50L52 45H58L60 50Z" fill="#241710"/>
<rect x="20" y="49.5" width="46" height="3" fill="#cdb88e"/>
<rect x="20" y="52.5" width="46" height="17" fill="#5e4430"/>
<rect x="26" y="55" width="14" height="13" fill="#3c2a1c"/>
<path d="M43 66Q43 56 50 54Q52 50 55 52L57 56Q62 58 62 68Z" fill="#ecdcc2"/>
<rect x="49" y="48.5" width="6.6" height="5" fill="#f4eada"/>
<rect x="58" y="58" width="8" height="12" fill="#c8ae88"/>
<rect x="-2" y="69" width="70" height="4.5" fill="#d2b88e"/>
<rect x="20" y="73.5" width="48" height="24" fill="#2e1c0e"/>
<rect x="24" y="77" width="40" height="8" fill="#56391f"/>
<ellipse cx="4.4" cy="41" rx="4.6" ry="5.6" fill="#2e2018"/>
<path d="M-2 50Q4 44 11 48Q20 52 21 62L22 90H-2Z" fill="#a8948a"/>
<path d="M12 60L20 62L22 90L14 90Z" fill="#6e5850"/>
<rect x="-2" y="88" width="26" height="9" fill="#241610"/>
</g></g>
<text x="2.6" y="12" font-family="Liberation Serif,serif" font-style="italic" font-size="14" fill="#b23a72" textLength="62.4" lengthAdjust="spacingAndGlyphs">Restaurant</text>
<text x="3" y="17.6" font-family="Liberation Sans,sans-serif" font-size="2.5" fill="#b05a84" textLength="58" lengthAdjust="spacingAndGlyphs">A Complete Guide to Restaurant Operation and Management</text>
<text x="26" y="93" font-family="Liberation Sans,sans-serif" font-size="2.4" fill="#e8dccc" textLength="11" lengthAdjust="spacingAndGlyphs">Tiffany Hooke</text>
</svg>
</div><div class="ul"></div></div>
<span id="ti7_0" class="f ti" style="left:418.20px;letter-spacing:0.001px;top:357.8px;">Guide to staff training.pdf</span>
<div class="cl" style="left:421.4px;top:404.4px"><svg width="12" height="8.3" viewBox="0 0 13 9"><path d="M3.2 8.1C1.7 8.1.6 7.1.6 5.8C.6 4.6 1.5 3.7 2.7 3.6C3 1.9 4.4.7 6.1.7C7.6.7 8.8 1.6 9.3 2.9C10.9 3 12.3 4.2 12.3 5.7C12.3 7.1 11.2 8.1 9.8 8.1Z" fill="none" stroke="#3f90e0" stroke-width="1.05"/><path d="M6.4 7V3.6M5.2 4.7L6.4 3.5L7.6 4.7" fill="none" stroke="#5a8fd0" stroke-width=".8"/></svg>
</div>
<span id="lo7" class="f lo" style="left:438.40px;letter-spacing:-0.499px;top:403.8px;">Device</span>
<span id="dt7" class="f dt" style="left:418.60px;letter-spacing:-0.150px;top:426.0px;">10/24/2017 11:46:58 AM</span>
<div class="card" style="left:627px;top:342px"><div class="th"><svg width="66" height="95" viewBox="0 0 66 95"><defs><filter id="b9" x="-20%" y="-20%" width="140%" height="140%"><feGaussianBlur stdDeviation="1"/></filter><linearGradient id="g9" x1="0" y1="0" x2="0" y2="1"><stop offset="0" stop-color="#e4e6e8"/><stop offset=".55" stop-color="#c9ccd0"/><stop offset=".62" stop-color="#5a5a58"/><stop offset="1" stop-color="#3a3a38"/></linearGradient><clipPath id="c9"><rect y="17.4" width="66" height="65.4"/></clipPath></defs>
<rect width="66" height="95" fill="#ece7e1"/>
<g clip-path="url(#c9)"><g filter="url(#b9)">
<rect x="-2" y="17" width="70" height="20" fill="#f1ede8"/>
<path d="M44 46Q50 41 57 45Q64 49 66 58L68 86H18Q12 80 12.5 70Q13 61 19 60L21 74L45 77Z" fill="#ad6745"/>
<path d="M46 50Q54 47 60 56L66 70V86H46Z" fill="#96522f"/>
<path d="M45.5 52H53M45.5 59H55M45.5 66H56" stroke="#7c3f26" stroke-width="1.2" fill="none"/>
<path d="M12 64Q14 58 19.5 59.5L21 71L14 73Z" fill="#b87355"/>
<path d="M18 77L46 78.5L52 86H14Z" fill="#7a3a26"/>
</g>
<rect x="19.8" y="21.3" width="26" height="57" rx="3.2" fill="#161616"/>
<rect x="21.8" y="29" width="22" height="34.6" fill="url(#g9)"/>
<rect x="21.8" y="29" width="22" height="3" fill="#2a2a2a" opacity=".55"/>
<circle cx="32.8" cy="68.6" r="2.2" fill="#f4f4f4"/><rect x="24.4" y="67.8" width="2.2" height="1.8" fill="#888"/><circle cx="40.4" cy="68.6" r=".9" fill="#aaa"/>
</g>
<rect width="11.2" height="16" fill="#3a1810"/>
<rect x="11.2" width="54.8" height="15.4" fill="#f0a81a"/>
<rect y="15.2" width="66" height="2.3" fill="#3a1810"/>
<circle cx="5.2" cy="6.6" r="3.1" fill="none" stroke="#fff" stroke-width="1.5"/><circle cx="5.2" cy="2.6" r="1" fill="#e0281e"/>
<text x="12.6" y="6.4" font-family="Liberation Sans,sans-serif" font-weight="700" font-size="5.6" fill="#fae9a2" textLength="27" lengthAdjust="spacingAndGlyphs">DIGITAL</text>
<text x="12.6" y="12.6" font-family="Liberation Sans,sans-serif" font-weight="700" font-size="6" fill="#fae9a2" textLength="50" lengthAdjust="spacingAndGlyphs">PHOTOGRAPHY</text>
<rect y="82.8" width="66" height="12.2" fill="#3a1810"/>
<text x="2" y="88.2" font-family="Liberation Sans,sans-serif" font-weight="700" font-size="2.5" fill="#f4ece4" textLength="38" lengthAdjust="spacingAndGlyphs">WAYS TO TAKE BETTER</text>
<text x="2" y="93.2" font-family="Liberation Sans,sans-serif" font-weight="700" font-size="3.7" fill="#f4ece4" textLength="60" lengthAdjust="spacingAndGlyphs">LANDSCAPE  PHOTOGRAPHS</text>
</svg>
</div><div class="ul"></div></div>
<span id="ti8_0" class="f ti" style="left:705.20px;letter-spacing:0.028px;top:357.8px;">Digital Photography.pdf</span>
<div class="cl" style="left:707.9px;top:404.4px"><svg width="12" height="8.3" viewBox="0 0 13 9"><path d="M3.2 8.1C1.7 8.1.6 7.1.6 5.8C.6 4.6 1.5 3.7 2.7 3.6C3 1.9 4.4.7 6.1.7C7.6.7 8.8 1.6 9.3 2.9C10.9 3 12.3 4.2 12.3 5.7C12.3 7.1 11.2 8.1 9.8 8.1Z" fill="none" stroke="#3f90e0" stroke-width="1.05"/><path d="M6.4 7V3.6M5.2 4.7L6.4 3.5L7.6 4.7" fill="none" stroke="#5a8fd0" stroke-width=".8"/></svg>
</div>
<span id="lo8" class="f lo or" style="left:725.00px;letter-spacing:-0.278px;top:403.8px;">Latest: Cloud</span>
<span id="dt8" class="f dt" style="left:705.20px;letter-spacing:-0.237px;top:426.0px;">10/30/2017 2:17:49 PM</span>
<span id="ask" class="f ask" style="left:67.00px;letter-spacing:-0.329px;">Ask me anything</span>
<span id="tm" class="f clk" style="left:942.00px;letter-spacing:0.161px;top:549.2px;">9:30 AM</span>
<span id="dte" class="f clk" style="left:937.00px;letter-spacing:0.012px;top:560.8px;">11/06/2017</span>
<span id="n5" class="f clk" style="left:1003.50px;letter-spacing:0.000px;top:561.6px;">5</span>
<!-- taskbar icons -->
<svg class="abs" style="left:0;top:544px" width="1020" height="30" viewBox="0 544 1020 30">
  <!-- windows logo -->
  <path d="M12 554.7L17 554V558.4H12ZM17.8 553.9L24.1 553V558.4H17.8ZM12 559.2H17V563.6L12 562.9ZM17.8 559.2H24.1V564.6L17.8 563.7Z" fill="#fff"/>
  <!-- cortana -->
  <circle cx="50.5" cy="558.8" r="7.6" fill="none" stroke="#fff" stroke-width="2.2"/>
  <!-- mic -->
  <g fill="none" stroke="#e8e8e8" stroke-width="1"><rect x="273.6" y="553" width="3.6" height="7.4" rx="1.8"/><path d="M271.6 558.4Q271.6 562.4 275.4 562.4Q279.2 562.4 279.2 558.4M275.4 562.4V564.6M273.2 564.8H277.6"/></g>
  <!-- task view -->
  <g fill="none" stroke="#f0f0f0" stroke-width="1.1"><rect x="306.6" y="554.6" width="8" height="9"/><rect x="301.8" y="555.9" width="2.6" height="6.4"/><rect x="316.8" y="555.9" width="2.6" height="6.4"/></g>
  <!-- edge -->
  <path d="M337.8 558.2C338.6 553.4 342 550.4 346.6 550.4C351.8 550.4 355.2 554 355.2 559V560.6H343.6C343.8 563 345.6 564.4 348.4 564.4C350.6 564.4 352.6 563.8 354.4 562.8V566C352.6 566.8 350.4 567.2 348 567.2C342.6 567.2 339.4 564 339.4 559.4C339.4 556.6 340.8 554.4 343 553.2C340.6 553.8 338.8 555.6 337.8 558.2ZM343.7 557.6H350.6C350.6 555.4 349.4 554 347.3 554C345.3 554 344 555.4 343.7 557.6Z" fill="#2d7fdb"/>
  <!-- explorer -->
  <path d="M373 552.2Q373 551.4 373.8 551.4H379L380.6 553H390.6Q391.4 553 391.4 553.8V565.2Q391.4 566 390.6 566H373.8Q373 566 373 565.2Z" fill="#f7cf52"/>
  <path d="M373 556H391.4V566H373Z" fill="#f3c23c"/>
  <path d="M376 566V559H388.4V566H385.6V562H378.8V566Z" fill="#3aa6e6"/>
  <rect x="376" y="557.4" width="12.4" height="1.8" fill="#5bc0f2"/>
  <!-- store -->
  <path d="M410.4 555.2H425.8V566.6L410.4 568Z" fill="#fff"/>
  <path d="M414.4 555V553.4Q414.4 550.6 418 550.6Q421.6 550.6 421.6 553.4V555" fill="none" stroke="#fff" stroke-width="1"/>
  <path d="M414 558.6L417.4 558.2V561.2H414ZM418.2 558.1L422.2 557.6V561.2H418.2ZM414 562H417.4V565L414 564.6ZM418.2 562H422.2V565.6L418.2 565.1Z" fill="#1a1a1a"/>
  <!-- pdf app -->
  <rect x="443.2" y="549.4" width="18.2" height="16.8" rx="4" fill="#de1111"/>
  <path d="M443.2 557.8H461.4V562.2Q461.4 566.2 457.4 566.2H447.2Q443.2 566.2 443.2 562.2Z" fill="#c40c0c"/>
  <text x="452.3" y="560.6" font-family="Liberation Sans,sans-serif" font-weight="700" font-style="italic" font-size="6.6" fill="#fff" text-anchor="middle" textLength="13" lengthAdjust="spacingAndGlyphs">PDF</text>
  <rect x="434.6" y="571" width="36" height="2.2" fill="#2f80d8"/>
  <!-- tray -->
  <path d="M849 561.2L852.9 557.4L856.8 561.2" fill="none" stroke="#e8e8e8" stroke-width="1"/>
  <rect x="871.4" y="556.6" width="10.6" height="5.4" fill="none" stroke="#e8e8e8" stroke-width="1"/><rect x="873" y="558.1" width="7.4" height="2.4" fill="#e8e8e8"/><rect x="882.2" y="558.2" width="1" height="2.2" fill="#e8e8e8"/>
  <g fill="none" stroke="#e0e0e0" stroke-width="1"><path d="M897.4 563.6A9 9 0 0 1 906.4 555.2" opacity=".95"/><path d="M900 563.6A6.4 6.4 0 0 1 906.4 557.6"/><path d="M902.6 563.6A3.8 3.8 0 0 1 906.4 560.2"/></g><circle cx="905.4" cy="563" r="1.1" fill="#e8e8e8"/>
  <path d="M918.8 558.2H921L923.6 555.6V563.6L921 561H918.8Z" fill="none" stroke="#e8e8e8" stroke-width=".9"/>
  <g fill="none" stroke="#e8e8e8" stroke-width=".9"><path d="M925.2 557.6Q926.6 559.6 925.2 561.6M927 556Q929.2 559.6 927 563.2M928.8 554.6Q931.8 559.6 928.8 564.6"/></g>
  <!-- notification -->
  <path d="M993 553H1003.8V561H998.6L996 563.6V561H993Z" fill="#f0f0f0"/>
  <path d="M995 555.4H1001.8M995 557.4H1001.8M995 559.2H999" stroke="#222" stroke-width=".7"/>
  <rect x="1015.4" y="544" width=".8" height="30" fill="#4a4a4a"/>
</svg>
<!-- watermark -->
<svg class="abs" style="left:760px;top:520px" width="260" height="54" viewBox="760 520 260 54" font-family="Liberation Sans,sans-serif">
  <rect x="866.1" y="529.4" width="70.6" height="41.2" rx="9" fill="rgba(51,51,51,.29)" stroke="rgba(255,255,255,.4)" stroke-width="2.8"/>
  <text x="849.2" y="560.8" font-weight="700" font-size="40" fill="rgba(45,45,45,.35)" stroke="rgba(152,152,152,.82)" stroke-width="2.8" stroke-linejoin="round">-</text>
  <text x="769.4" y="561.6" font-weight="700" font-size="31" fill="rgba(45,45,45,.35)" stroke="rgba(152,152,152,.82)" stroke-width="2.4" stroke-linejoin="round" textLength="81.6" lengthAdjust="spacingAndGlyphs">SOFT</text>
  <text x="877" y="562" font-size="35" fill="rgba(255,255,255,.4)" textLength="44.6" lengthAdjust="spacingAndGlyphs">OK</text>
  <text x="940.4" y="561.8" font-size="32" fill="rgba(150,150,150,.78)" stroke="rgba(255,255,255,.36)" stroke-width="2.2" stroke-linejoin="round" paint-order="stroke">.</text>
  <text x="950.6" y="561.8" font-size="32" fill="rgba(150,150,150,.78)" stroke="rgba(255,255,255,.36)" stroke-width="2.2" stroke-linejoin="round" paint-order="stroke" textLength="58" lengthAdjust="spacingAndGlyphs">NET</text>
</svg>
</div>
</body></html>
